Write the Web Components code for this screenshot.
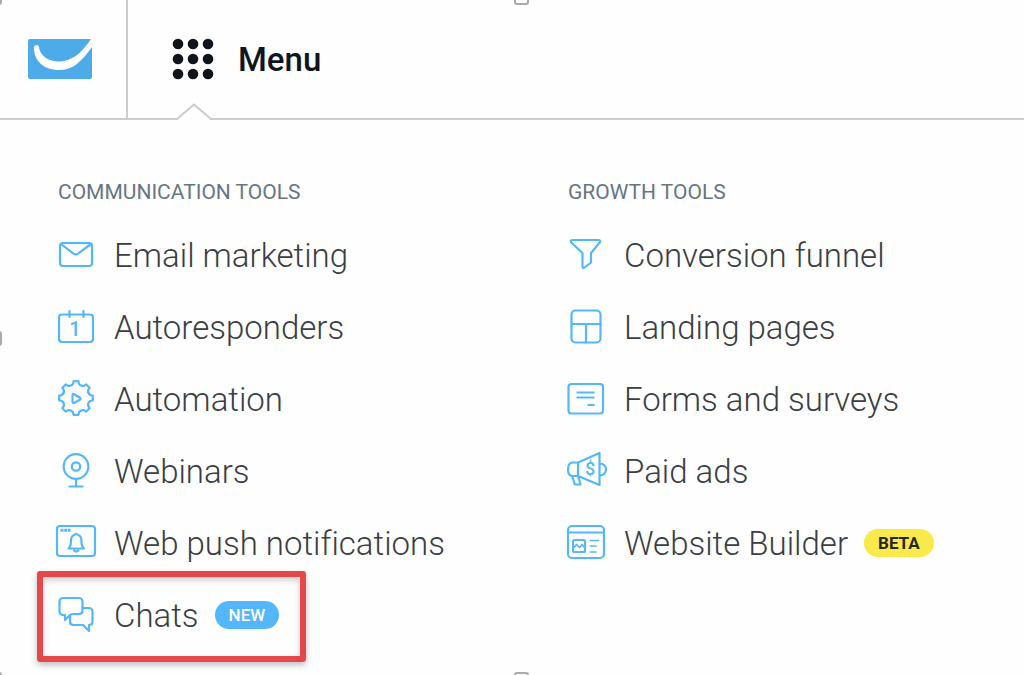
<!DOCTYPE html>
<html lang="en">
<head>
<meta charset="utf-8">
<meta name="viewport" content="width=device-width, initial-scale=1">
<title>Menu</title>
<style>
html,body{margin:0;background:#fefefe}
body{font-family:Roboto,"Liberation Sans",sans-serif;font-variant-ligatures:none;min-height:100vh}
</style>
</head>
<body>
<app-page></app-page>
<script>
const gear = (cx, cy, ro, ri) => {
  const p = (r, deg) => {
    const a = deg * Math.PI / 180;
    return (cx + r * Math.sin(a)).toFixed(2) + ' ' + (cy - r * Math.cos(a)).toFixed(2);
  };
  let d = 'M' + p(ro, -8);
  for (let i = 0; i < 8; i++) {
    const a = i * 45;
    d += 'L' + p(ro, a + 8) + 'L' + p(ri + 1, a + 12) + 'Q' + p(ri - 1, a + 22.5) + ' ' + p(ri + 1, a + 33) + 'L' + p(ro, a + 37);
  }
  return d + 'Z';
};
const ICONS = {
  email: '<rect x="4" y="8" width="32" height="23" rx="3"/><path d="M5 9l12.500 9.600q2.300 1.600 4.600 0L35 9"/>',
  calendar: '<rect x="3" y="7.500" width="34" height="27.500" rx="3"/><path d="M13.500 4v6M27.500 4v6"/><text x="19" y="29" text-anchor="middle" font-size="20">1</text>',
  gear: '<path d="' + gear(20, 19, 17, 13.5) + '"/><path d="M16.500 16.200v6.400q0 2 1.800 1.100l5.600-3q1.500-.9 0-1.900l-5.600-3.500q-1.800-1-1.800.9z"/>',
  webcam: '<circle cx="20" cy="15.500" r="12.300"/><circle cx="20" cy="15.500" r="4.200"/><path d="M20 28v7M13.500 35.500h13"/>',
  push: '<rect x="1" y="3" width="38" height="30" rx="3"/><path d="M4.500 7.300h10" stroke-width="3" stroke-dasharray="3 .7" stroke-linecap="butt"/><path d="M12.500 25.500q2.500-2 2.500-8q0-4.500 3.500-5.500q1.700-2.500 3.400 0q3.500 1 3.500 5.500q0 6 2.600 8zM18 27.500q2.200 2 4.400 0"/>',
  chats: '<path d="M14 20L9 25v-5H7a3.500 3.500 0 0 1-3.500-3.500v-10A3.500 3.500 0 0 1 7 3h16a3.500 3.500 0 0 1 3.500 3.500v9q0 3.500-3.500 3.500h-5q-3 0-4 1z"/><path d="M26.500 13H33a3.500 3.500 0 0 1 3.500 3.500v10Q36.500 30 33 30v6l-6-6H17.500Q14 30 14 26.500V20"/>',
  funnel: '<path d="M7 5h25q3.500 0 1.500 2.800L25 18v9.500l-6.500 5q-2 1-2-1V18L5.500 7.800Q3.500 5 7 5z"/>',
  layout: '<rect x="5.500" y="3.500" width="29" height="32" rx="4"/><path d="M5.500 17h29M20 17v18.500"/>',
  form: '<rect x="2.500" y="5" width="34.500" height="29.500" rx="3"/><path d="M10.500 13.500h18M10.500 18.500h18M21.500 26h7" stroke-linecap="butt"/>',
  megaphone: '<path d="M12 11.500L33.500 2v32L12 25H6.500Q2 25 2 18.500t4.500-7zM12 11.500V25M34 12.500a5.500 5.500 0 0 1 0 12M6 25l3 8.500h5.500L12 25"/><text x="24" y="24" text-anchor="middle" font-size="18">$</text>',
  site: '<rect x="2" y="3" width="36" height="32" rx="4"/><path d="M2 9.500h36"/><rect x="7" y="17" width="12" height="12" rx="1.500"/><path d="M7.500 25l3-3.500 3 3 2.500-3 3 3.500M24.500 17.500h8M24.500 23h5.500M24.500 29h5.500" stroke-width="1.700"/>'
};
const define = (name, html) => {
  const t = document.createElement('template');
  t.innerHTML = html;
  customElements.define(name, class extends HTMLElement {
    constructor() {
      super();
      this.attachShadow({mode: 'open'}).append(t.content.cloneNode(true));
    }
  });
};

customElements.define('tool-icon', class extends HTMLElement {
  connectedCallback() {
    if (this.shadowRoot) return;
    this.attachShadow({mode: 'open'}).innerHTML = `
      <style>
        :host{display:block;flex:none;width:40px;height:40px;color:#55b7fb}
        svg{display:block;width:100%;height:100%;overflow:visible;fill:none;stroke:currentColor;stroke-width:2.2;stroke-linejoin:round;stroke-linecap:round}
        text{fill:currentColor;stroke:none;font-weight:500}
      </style>
      <svg viewBox="0 0 40 40" aria-hidden="true">${ICONS[this.getAttribute('name')] || ''}</svg>`;
  }
});

define('tool-badge', `
  <style>
    :host{display:flex;align-items:center;justify-content:center;height:28px;padding:0 14px;border-radius:14px;background:#55b7fb;color:#fff;font-size:17px;font-weight:500;line-height:20px}
    :host([tone=beta]){background:#fae94b;color:#24272b;font-weight:700}
  </style><slot></slot>`);

define('tool-item', `
  <style>
    :host{display:block}
    a{display:flex;align-items:center;height:72px;width:max-content;color:#3a3e44;text-decoration:none;font-size:33px;font-weight:300;line-height:40px;white-space:nowrap}
    span{padding:2px 16px 0 18px}
  </style>
  <a href="#"><slot name="icon"></slot><span><slot></slot></span><slot name="badge"></slot></a>`);

define('tool-group', `
  <style>
    :host{display:block}
    h2{margin:0;padding:0 2px;color:#667585;font-size:21px;font-weight:400;line-height:24px;white-space:nowrap}
    nav{padding-top:15px}
  </style>
  <h2><slot name="title"></slot></h2><nav><slot></slot></nav>`);

define('highlight-frame', `
  <style>
    :host{display:block;position:relative;width:max-content}
    i{position:absolute;inset:-8px -27px -11px -19px;border:6px solid #e5484b;border-radius:3px;box-shadow:0 3px 6px rgba(0,0,0,.25),inset 0 3px 6px rgba(0,0,0,.2);pointer-events:none}
  </style>
  <slot></slot><i></i>`);

define('top-bar', `
  <style>
    :host{display:flex;height:118px;border-bottom:2px solid #ccc}
    .brand{display:flex;align-items:center;padding:0 34px 0 28px;border-right:2px solid #ccc}
    .brand svg{display:block;width:64px;height:40px}
    button{position:relative;display:flex;align-items:center;gap:24px;margin-left:44px;padding:0;border:0;background:none;color:#10151c;font:500 33px/40px Roboto,"Liberation Sans",sans-serif}
    span{padding-top:2px}
    .dots{width:42px;height:42px;fill:currentColor}
    .caret{position:absolute;left:4px;bottom:-2px;width:36px;height:17px}
  </style>
  <a class="brand" href="#" aria-label="Home">
    <svg viewBox="0 0 64 40"><rect width="64" height="40" rx="2" fill="#4eabe9"/><path d="M6 9Q6 6 8.500 6T11 9C13 17 20 22.500 31 22.500C43 22.500 53 15 63 0H64V8C53 23 45 31 31 31C16 31 6 22 6 9z" fill="#fefefe"/></svg>
  </a>
  <button type="button" aria-expanded="true">
    <svg class="dots" viewBox="0 0 42 42" aria-hidden="true"><circle cx="6" cy="6" r="5.300"/><circle cx="21" cy="6" r="5.300"/><circle cx="36" cy="6" r="5.300"/><circle cx="6" cy="21" r="5.300"/><circle cx="21" cy="21" r="5.300"/><circle cx="36" cy="21" r="5.300"/><circle cx="6" cy="36" r="5.300"/><circle cx="21" cy="36" r="5.300"/><circle cx="36" cy="36" r="5.300"/></svg>
    <span><slot></slot></span>
    <svg class="caret" viewBox="0 0 36 17" aria-hidden="true"><path d="M0 17V15L18 1L36 15V17z" fill="#fefefe"/><path d="M0 16h1L18 1.500L35 16h1" fill="none" stroke="#ccc" stroke-width="2"/></svg>
  </button>`);

define('selection-handles', `
  <style>
    :host{position:absolute;inset:0;overflow:hidden;pointer-events:none}
    i{position:absolute;width:11px;height:11px;border:2px solid #aaa;border-radius:3px;background:#fff}
    .n{top:-10px}.nw{left:-13px;top:-10px}.w{left:-13px;top:331px}.s{bottom:-12px}.sw{left:-13px;bottom:-12px}
    .n,.s{left:calc(50% + 2px)}
  </style><i class="n"></i><i class="nw"></i><i class="w"></i><i class="s"></i><i class="sw"></i>`);

define('app-page', `
  <style>
    :host{display:block;position:relative;min-height:100vh}
    main{display:grid;grid-template-columns:1fr 1fr;gap:52px;padding:60px 0 0 56px}
  </style>
  <top-bar>Menu</top-bar>
  <main>
    <tool-group>
      <span slot="title">COMMUNICATION TOOLS</span>
      <tool-item><tool-icon slot="icon" name="email"></tool-icon>Email marketing</tool-item>
      <tool-item><tool-icon slot="icon" name="calendar"></tool-icon>Autoresponders</tool-item>
      <tool-item><tool-icon slot="icon" name="gear"></tool-icon>Automation</tool-item>
      <tool-item><tool-icon slot="icon" name="webcam"></tool-icon>Webinars</tool-item>
      <tool-item><tool-icon slot="icon" name="push"></tool-icon>Web push notifications</tool-item>
      <highlight-frame><tool-item><tool-icon slot="icon" name="chats"></tool-icon>Chats<tool-badge slot="badge">NEW</tool-badge></tool-item></highlight-frame>
    </tool-group>
    <tool-group>
      <span slot="title">GROWTH TOOLS</span>
      <tool-item><tool-icon slot="icon" name="funnel"></tool-icon>Conversion funnel</tool-item>
      <tool-item><tool-icon slot="icon" name="layout"></tool-icon>Landing pages</tool-item>
      <tool-item><tool-icon slot="icon" name="form"></tool-icon>Forms and surveys</tool-item>
      <tool-item><tool-icon slot="icon" name="megaphone"></tool-icon>Paid ads</tool-item>
      <tool-item><tool-icon slot="icon" name="site"></tool-icon>Website Builder<tool-badge slot="badge" tone="beta">BETA</tool-badge></tool-item>
    </tool-group>
  </main>
  <selection-handles></selection-handles>`);
</script>
</body>
</html>
